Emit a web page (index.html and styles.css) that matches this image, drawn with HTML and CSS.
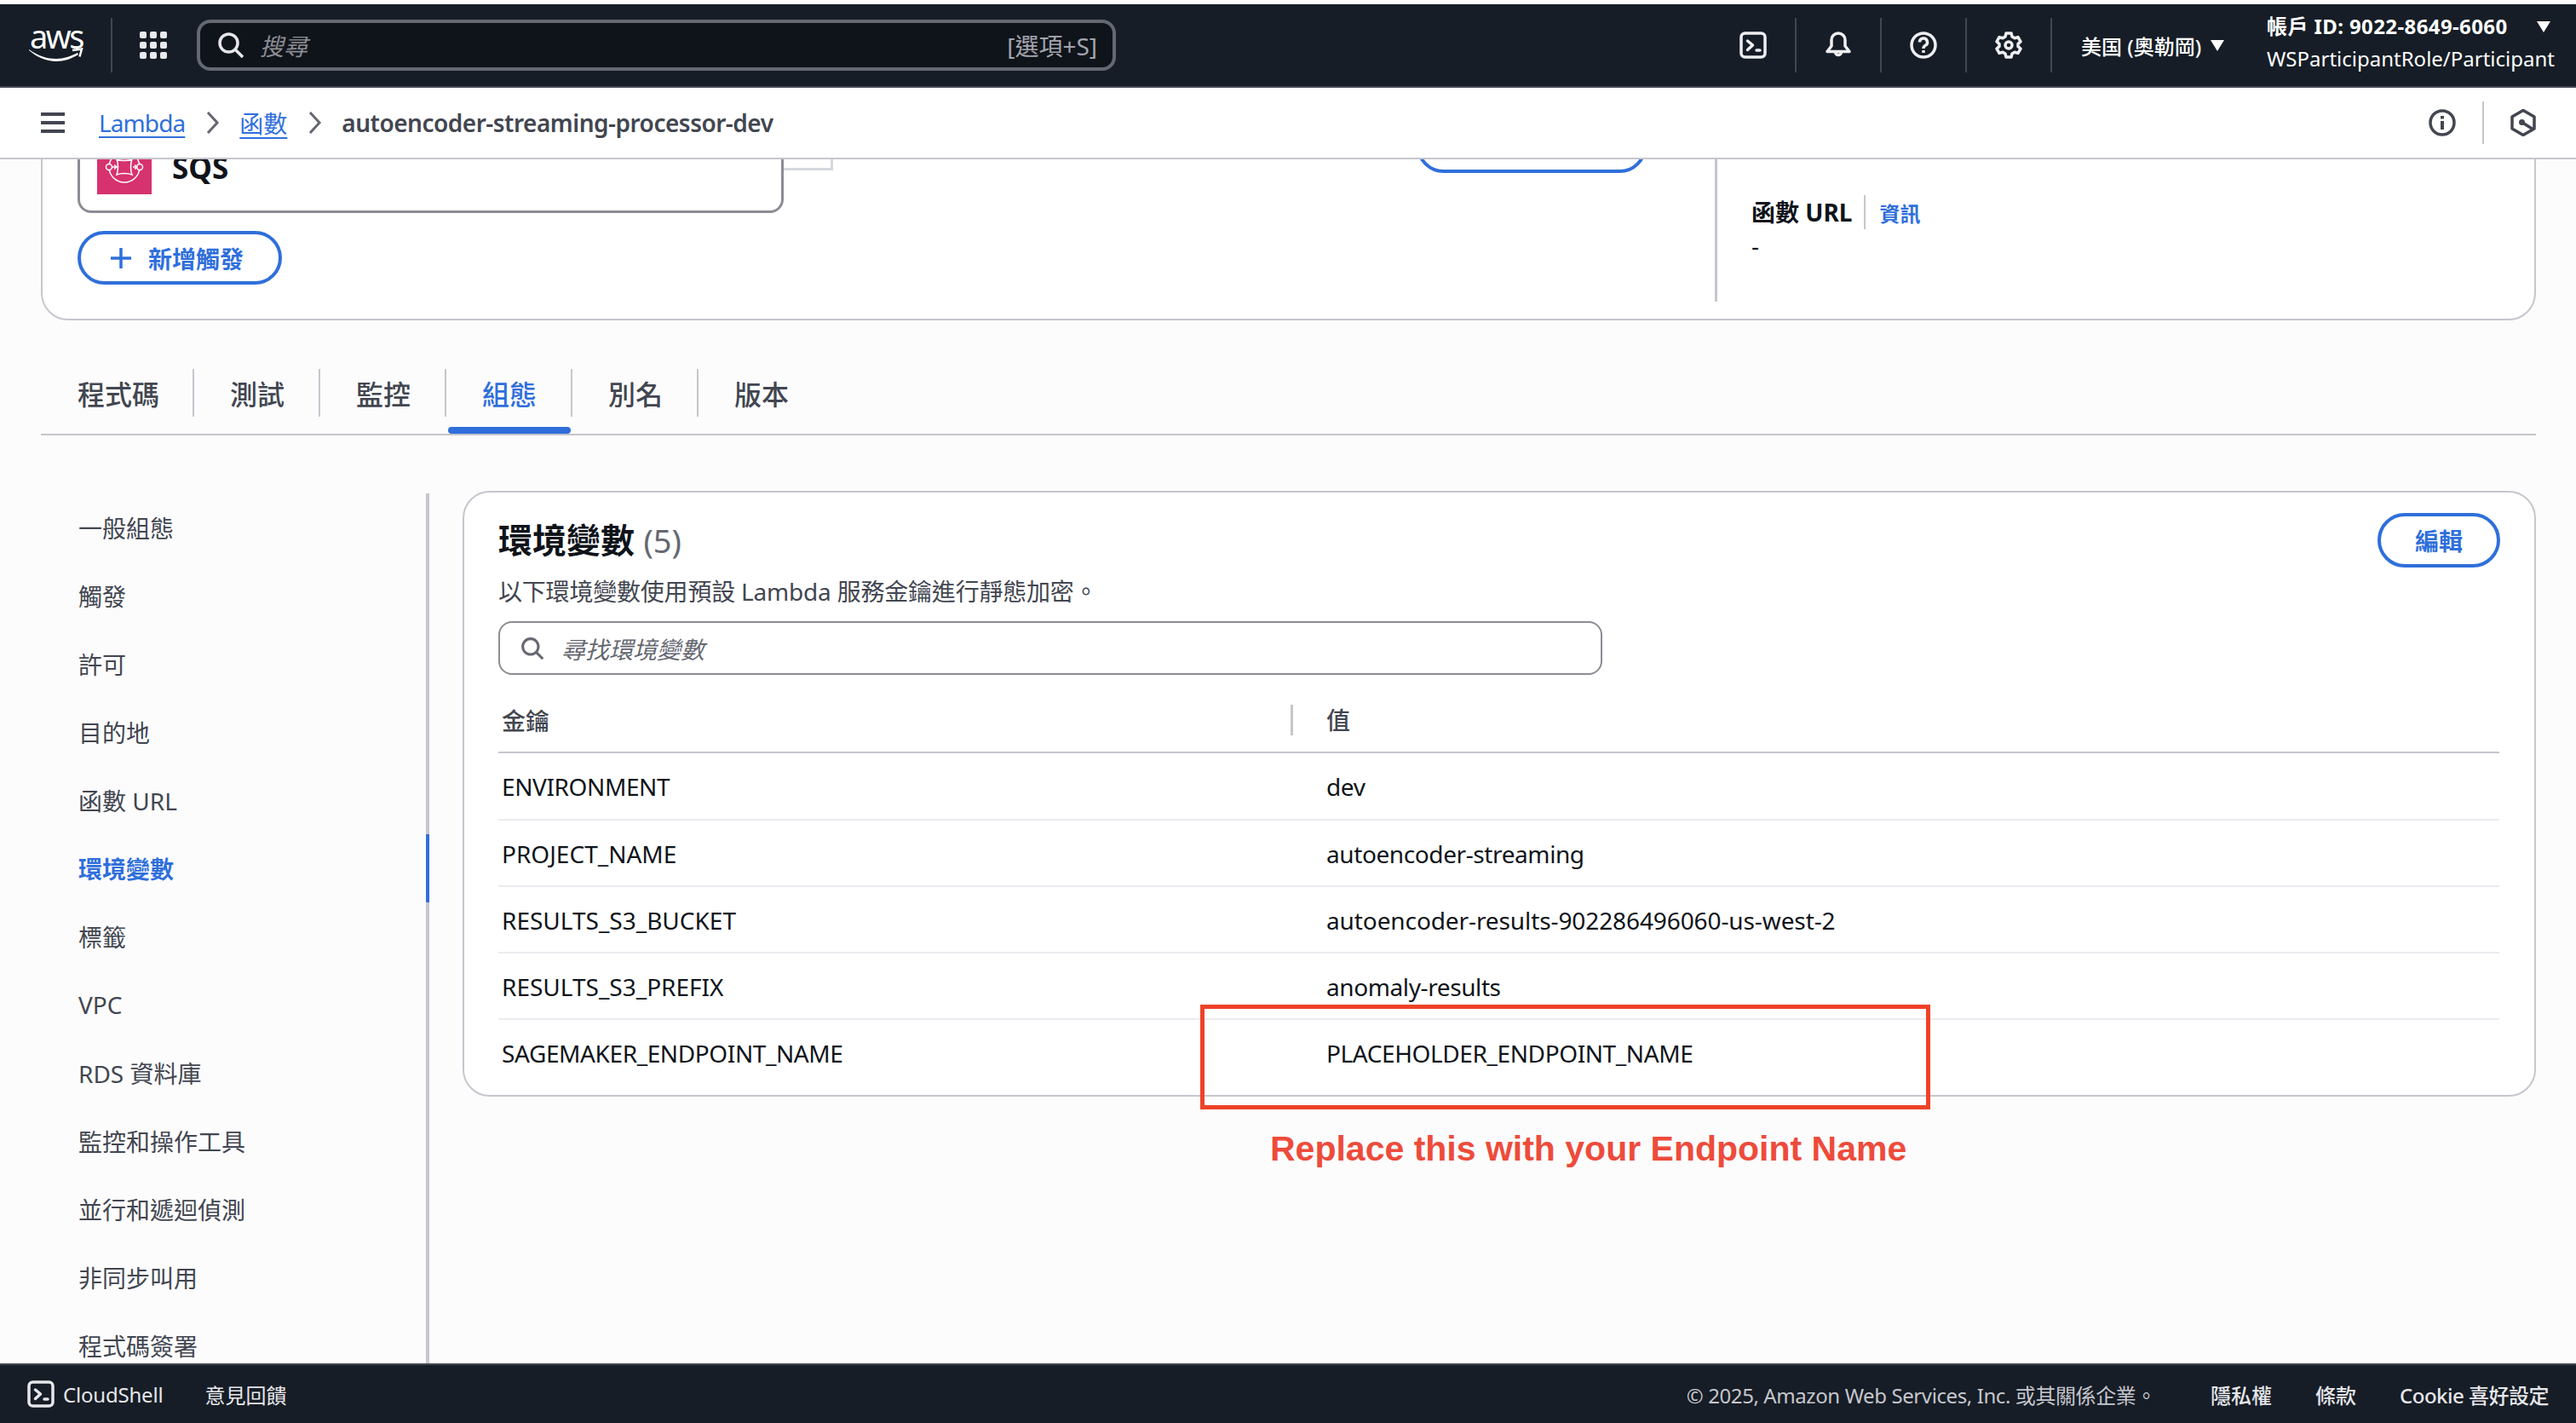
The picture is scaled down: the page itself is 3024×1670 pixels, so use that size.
FILE: index.html
```html
<!DOCTYPE html>
<html lang="zh-Hant">
  <head>
    <meta charset="UTF-8" />
    <title>autoencoder-streaming-processor-dev - Lambda</title>
    <link rel="stylesheet" href="styles.css">
  </head>
  <body>
    <header class="topnav">
      <div class="logo">
        <span class="logo-text">aws</span>
        <svg class="logo-smile" viewBox="0 0 64 18" width="64" height="18"><path d="M0 3C11 11 22 14 32 14c9 0 17-3 25-7l1 2c-8 5-17 8-26 8C21 17 9 12 0 4z" fill="#fff"/><path d="M51 4l11-1.500-2.500 9" fill="none" stroke="#fff" stroke-width="2.500"/></svg>
      </div>
      <div class="nav-sep"></div>
      <svg class="apps" viewBox="0 0 32 32" width="32" height="32" fill="#e9e9ee">
        <rect width="8" height="8" rx="2"/><rect x="12" width="8" height="8" rx="2"/><rect x="24" width="8" height="8" rx="2"/>
        <rect y="12" width="8" height="8" rx="2"/><rect x="12" y="12" width="8" height="8" rx="2"/><rect x="24" y="12" width="8" height="8" rx="2"/>
        <rect y="24" width="8" height="8" rx="2"/><rect x="12" y="24" width="8" height="8" rx="2"/><rect x="24" y="24" width="8" height="8" rx="2"/>
      </svg>
      <div class="global-search">
        <svg viewBox="0 0 32 32" width="32" height="32" fill="none" stroke="#e6e6ea" stroke-width="3.500"><circle cx="13.500" cy="13.500" r="10.500"/><path d="M21 21l9 9"/></svg>
        <span class="global-search-hint">搜尋</span>
        <span class="shortcut">[選項+S]</span>
      </div>
      <div class="nav-right">
        <div class="nav-icon">
          <svg viewBox="0 0 32 32" width="32" height="32" fill="none" stroke="#eeeef2" stroke-width="3.500" stroke-linecap="round" stroke-linejoin="round"><rect x="2" y="2" width="28" height="28" rx="4.500"/><path d="M9.500 11l6 5-6 5.500M20 22h4"/></svg>
        </div>
        <div class="nav-icon">
          <svg viewBox="0 0 32 32" width="32" height="32" fill="none" stroke="#eeeef2" stroke-width="3.500" stroke-linecap="round" stroke-linejoin="round"><path d="M8 17v-7a8 8 0 0 1 16 0v7l5 6.500H3z"/><path d="M12.500 24a3.500 3.500 0 0 0 7 0"/></svg>
        </div>
        <div class="nav-icon">
          <svg viewBox="0 0 32 32" width="32" height="32" fill="none" stroke="#eeeef2" stroke-width="3.500"><circle cx="16" cy="16" r="14"/><path d="M11.500 12.500a4.500 4.500 0 1 1 6.500 4c-1.500.8-2 1.500-2 3.500"/><path d="M16 22v3"/></svg>
        </div>
        <div class="nav-icon">
          <svg viewBox="0 0 32 32" width="32" height="32" fill="none" stroke="#eeeef2" stroke-width="3.500" stroke-linejoin="round"><path d="M13 2h6l1 4 3 1.800 4-1.200 3 5.200-3 2.800v2.800l3 2.800-3 5.200-4-1.200-3 1.800-1 4h-6l-1-4-3-1.800-4 1.200-3-5.200 3-2.800v-2.800l-3-2.800 3-5.200 4 1.200 3-1.800z"/><circle cx="16" cy="16" r="4"/></svg>
        </div>
        <div class="region">美国 (奧勒岡)<span class="caret"></span></div>
        <div class="account">
          <div class="account-id">帳戶 ID: 9022-8649-6060<span class="caret"></span></div>
          <div>WSParticipantRole/Participant</div>
        </div>
      </div>
    </header>

    <nav class="crumbbar">
      <div class="hamburger"><span></span><span></span><span></span></div>
      <a class="crumb crumb-latin" href="#">Lambda</a>
      <svg class="chevron" viewBox="0 0 16 28" width="16" height="28" fill="none" stroke="#656871" stroke-width="3"><path d="M2 2l11 12L2 26"/></svg>
      <a class="crumb" href="#">函數</a>
      <svg class="chevron" viewBox="0 0 16 28" width="16" height="28" fill="none" stroke="#656871" stroke-width="3"><path d="M2 2l11 12L2 26"/></svg>
      <span class="crumb-current">autoencoder-streaming-processor-dev</span>
      <div class="crumb-tools">
        <div class="crumb-tool">
          <svg viewBox="0 0 32 32" width="32" height="32" fill="none" stroke="#424650" stroke-width="3.500"><circle cx="16" cy="16" r="14"/><path d="M16 14v10" stroke-width="4"/><path d="M16 8v3.500" stroke-width="4"/></svg>
        </div>
        <div class="crumb-tool crumb-tool-last">
          <svg viewBox="0 0 32 32" width="32" height="32" fill="none" stroke="#424650" stroke-width="3.500" stroke-linejoin="round"><path d="M16 1.500l13 7.500v14l-13 7.500L3 23V9z"/><circle cx="14.500" cy="15.500" r="3.500" fill="#424650" stroke="none"/><path d="M14.500 15.500L28 24"/></svg>
        </div>
      </div>
    </nav>

    <main class="page">
      <section class="overview">
        <div class="diagram">
          <div class="trigger-col">
            <div class="trigger-box">
              <div class="sqs-icon">
                <svg viewBox="0 0 64 64" width="64" height="64" fill="none" stroke="#fff" stroke-width="1.500"><circle cx="32" cy="32" r="18"/><circle cx="14" cy="32" r="3.500" fill="#d6326f"/><circle cx="50" cy="32" r="3.500" fill="#d6326f"/><path d="M23 23c5 2 13 2 18 0-2 5-2 13 0 18-5-2-13-2-18 0 2-5 2-13 0-18z" fill="#d6326f"/><path d="M18 32h4M42 32h4M20 29.500l3 2.500-3 2.500M44 29.500l3 2.500-3 2.500"/></svg>
              </div>
              <span class="sqs-name">SQS</span>
            </div>
            <button class="btn btn-add">
              <svg viewBox="0 0 24 24" width="24" height="24" fill="none" stroke="#2f6fdb" stroke-width="3.500"><path d="M12 0v24M0 12h24"/></svg>
              新增觸發
            </button>
          </div>
          <div class="connector"></div>
          <button class="btn btn-dest"></button>
        </div>
        <div class="overview-side">
          <div class="side-title">
            <strong>函數 URL</strong>
            <a class="info-link" href="#">資訊</a>
          </div>
          <div class="side-value">-</div>
        </div>
      </section>

      <div class="tabs">
        <div class="tab">程式碼</div>
        <div class="tab">測試</div>
        <div class="tab">監控</div>
        <div class="tab tab-active">組態</div>
        <div class="tab">別名</div>
        <div class="tab">版本</div>
      </div>

      <div class="config">
        <ul class="sidenav">
          <li>一般組態</li>
          <li>觸發</li>
          <li>許可</li>
          <li>目的地</li>
          <li>函數 URL</li>
          <li class="active">環境變數</li>
          <li>標籤</li>
          <li>VPC</li>
          <li>RDS 資料庫</li>
          <li>監控和操作工具</li>
          <li>並行和遞迴偵測</li>
          <li>非同步叫用</li>
          <li>程式碼簽署</li>
        </ul>

        <div class="panel-wrap">
          <section class="panel">
            <div class="panel-head">
              <div>
                <h2>環境變數 <span class="count">(5)</span></h2>
                <p class="panel-desc">以下環境變數使用預設 Lambda 服務金鑰進行靜態加密。</p>
              </div>
              <button class="btn btn-edit">編輯</button>
            </div>
            <div class="filter">
              <svg viewBox="0 0 32 32" width="28" height="28" fill="none" stroke="#656871" stroke-width="3.500"><circle cx="13.500" cy="13.500" r="10.500"/><path d="M21 21l9 9"/></svg>
              <span class="filter-hint">尋找環境變數</span>
            </div>
            <table class="env-table">
              <thead>
                <tr><th class="col-key">金鑰</th><th><span class="th-value">值</span></th></tr>
              </thead>
              <tbody>
                <tr><td class="tight">ENVIRONMENT</td><td class="tight">dev</td></tr>
                <tr><td>PROJECT_NAME</td><td class="tight">autoencoder-streaming</td></tr>
                <tr><td>RESULTS_S3_BUCKET</td><td class="num">autoencoder-results-902286496060-us-west-2</td></tr>
                <tr><td>RESULTS_S3_PREFIX</td><td class="tight">anomaly-results</td></tr>
                <tr><td class="tight">SAGEMAKER_ENDPOINT_NAME</td><td class="tight">PLACEHOLDER_ENDPOINT_NAME</td></tr>
              </tbody>
            </table>
          </section>
          <div class="callout-box"></div>
          <div class="callout-text">Replace this with your Endpoint Name</div>
        </div>
      </div>
    </main>

    <footer class="footer">
      <svg viewBox="0 0 32 32" width="32" height="32" fill="none" stroke="#e6e6ea" stroke-width="3.500" stroke-linecap="round" stroke-linejoin="round"><rect x="2" y="2" width="28" height="28" rx="4.500"/><path d="M9.500 11l6 5-6 5.500M20 22h4"/></svg>
      <span class="footer-shell">CloudShell</span>
      <span class="footer-feedback">意見回饋</span>
      <span class="footer-copy">© 2025, Amazon Web Services, Inc. 或其關係企業。</span>
      <span class="footer-link">隱私權</span>
      <span class="footer-link">條款</span>
      <span class="footer-link footer-cookie">Cookie 喜好設定</span>
    </footer>
  </body>
</html>
```

FILE: styles.css
```css
html {
  overflow: hidden;
}
body {
  margin: 0;
  height: 1670px;
  display: flex;
  flex-direction: column;
  font-family: "Noto Sans", "Noto Sans CJK TC", sans-serif;
  font-size: 28px;
  color: #0f141a;
  background-color: #fcfcfd;
  overflow: hidden;
}
a {
  color: #2f6fdb;
}
button {
  font-family: inherit;
}

/* top bar */
.topnav {
  margin-top: 5px;
  height: 96px;
  flex: none;
  display: flex;
  align-items: center;
  background-color: #161d26;
  border-bottom: 2px solid #424650;
  color: white;
  box-sizing: content-box;
}
.logo {
  width: 64px;
  height: 40px;
  margin-left: 34px;
  position: relative;
}
.logo-text {
  position: absolute;
  left: 1px;
  top: -11px;
  font-size: 38px;
  line-height: 40px;
  letter-spacing: -2.5px;
}
.logo-smile {
  position: absolute;
  left: 0;
  bottom: 0;
}
.nav-sep {
  width: 2px;
  height: 64px;
  margin: 0 32px 0 32px;
  background-color: #424650;
}
.global-search {
  width: 1079px;
  height: 60px;
  box-sizing: border-box;
  margin-left: 35px;
  padding: 0 18px 0 20px;
  display: flex;
  align-items: center;
  gap: 18px;
  background-color: #0f141a;
  border: 4px solid #656871;
  border-radius: 16px;
}
.global-search-hint {
  font-style: italic;
  color: #8c8c94;
}
.shortcut {
  margin-left: auto;
  color: #a4a4ad;
}
.nav-right {
  margin-left: auto;
  display: flex;
  align-items: center;
}
.nav-icon {
  width: 98px;
  height: 64px;
  display: flex;
  align-items: center;
  justify-content: center;
  border-right: 2px solid #424650;
}
.region {
  display: flex;
  align-items: center;
  padding-left: 34px;
  width: 252px;
  box-sizing: border-box;
  font-size: 24px;
  white-space: nowrap;
  font-weight: 500;
}
.caret {
  display: inline-block;
  margin-left: 11px;
  border-left: 8px solid transparent;
  border-right: 8px solid transparent;
  border-top: 13px solid white;
}
.account {
  width: 363px;
  margin-bottom: 6px;
  font-size: 24px;
  line-height: 38px;
  white-space: nowrap;
}
.account-id {
  display: flex;
  align-items: center;
  font-weight: 700;
  letter-spacing: 0.4px;
}
.account-id .caret {
  margin-left: 34px;
}

/* breadcrumbs */
.crumbbar {
  height: 82px;
  flex: none;
  display: flex;
  align-items: center;
  background-color: white;
  border-bottom: 2px solid #c6c6cd;
  color: #424650;
}
.hamburger {
  width: 28px;
  margin: 0 40px 0 48px;
  display: flex;
  flex-direction: column;
  gap: 6px;
}
.hamburger span {
  height: 4px;
  background-color: #424650;
}
.crumb {
  text-underline-offset: 5px;
}
.crumb-latin {
  letter-spacing: -0.9px;
}
.chevron {
  margin: 0 23px 0 25px;
}
.crumb-current {
  font-weight: 600;
  letter-spacing: -0.5px;
}
.crumb-tools {
  margin-left: auto;
  display: flex;
  align-items: center;
}
.crumb-tool {
  width: 94px;
  height: 50px;
  display: flex;
  align-items: center;
  justify-content: center;
  border-right: 2px solid #c6c6cd;
}
.crumb-tool-last {
  width: 92px;
  border-right: none;
  margin-right: 16px;
}

/* page */
.page {
  flex: 1;
  min-height: 0;
  overflow: hidden;
  padding: 0 47px 0 48px;
}
.overview {
  height: 259px;
  margin-top: -70px;
  box-sizing: border-box;
  padding: 0 0 20px 41px;
  display: flex;
  background-color: white;
  border: 2px solid #c6c6cd;
  border-radius: 32px;
}
.diagram {
  width: 1922px;
  position: relative;
  display: flex;
  align-items: flex-start;
}
.trigger-col {
  width: 829px;
  display: flex;
  flex-direction: column;
  align-items: flex-start;
}
.trigger-box {
  width: 100%;
  height: 120px;
  margin-top: 11px;
  box-sizing: border-box;
  padding-left: 20px;
  display: flex;
  align-items: center;
  gap: 24px;
  background-color: white;
  border: 3px solid #8c8c94;
  border-radius: 16px;
}
.sqs-icon {
  width: 64px;
  height: 64px;
  background-color: #d6326f;
  margin-top: 12px;
}
.sqs-name {
  font-size: 35px;
  line-height: 24px;
  font-weight: 700;
  margin-top: 14px;
}
.connector {
  width: 58px;
  height: 60px;
  border-right: 3px solid #d5d8de;
  border-bottom: 3px solid #d5d8de;
  box-sizing: border-box;
  margin-top: 21px;
}
.btn {
  background-color: white;
  color: #2f6fdb;
  border: 4px solid #2f6fdb;
  border-radius: 40px;
  font-size: 28px;
  font-weight: 700;
  height: 63px;
  display: flex;
  align-items: center;
  justify-content: center;
}
.btn-add {
  width: 240px;
  margin-top: 21px;
  padding: 0 0 0 35px;
  justify-content: flex-start;
  gap: 20px;
}
.btn-dest {
  width: 270px;
  margin: 21px 80px 0 auto;
}
.overview-side {
  flex: 1;
  border-left: 3px solid #c6c6cd;
  padding: 110px 0 0 40px;
}
.side-title {
  display: flex;
  align-items: center;
}
.side-title strong {
  padding-right: 14px;
  border-right: 2px solid #c6c6cd;
  line-height: 40px;
}
.info-link {
  margin-left: 16px;
  font-size: 24px;
  font-weight: 600;
  text-decoration: none;
}
.side-value {
  line-height: 38px;
}

/* tabs */
.tabs {
  display: flex;
  margin-top: 57px;
  height: 76px;
  border-bottom: 2px solid #c6c6cd;
  box-sizing: content-box;
}
.tab {
  width: 148px;
  height: 56px;
  padding-left: 42px;
  box-sizing: border-box;
  display: flex;
  align-items: center;
  font-size: 32px;
  color: #424650;
  border-right: 2px solid #c6c6cd;
  position: relative;
  font-weight: 500;
}
.tab:first-child {
  width: 180px;
  padding-left: 43px;
}
.tab:last-child {
  border-right: none;
}
.tab-active {
  color: #2f6fdb;
}
.tab-active::after {
  content: "";
  position: absolute;
  left: 2px;
  right: 0;
  top: 68px;
  height: 8px;
  border-radius: 4px;
  background-color: #2f6fdb;
}

/* config area */
.config {
  display: flex;
  align-items: flex-start;
  margin-top: 65px;
}
.sidenav {
  list-style: none;
  margin: 3px 0 0;
  padding: 0 0 40px 0;
  width: 456px;
  box-sizing: border-box;
  border-right: 4px solid #c6c6cd;
  color: #424650;
}
.sidenav li {
  height: 80px;
  padding-left: 44px;
  display: flex;
  align-items: center;
}
.sidenav li.active {
  color: #2f6fdb;
  font-weight: 700;
  margin-right: -4px;
  border-right: 4px solid #2f6fdb;
}
.panel-wrap {
  flex: 1;
  margin-left: 39px;
  position: relative;
}
.panel {
  height: 711px;
  box-sizing: border-box;
  padding: 26px 40px 0 40px;
  background-color: white;
  border: 2px solid #c6c6cd;
  border-radius: 32px;
}
.panel-head {
  display: flex;
  justify-content: space-between;
  align-items: flex-start;
}
h2 {
  margin: 0;
  font-size: 40px;
  line-height: 60px;
  font-weight: 700;
}
.count {
  color: #656871;
  font-weight: 400;
  font-size: 38px;
}
.panel-desc {
  margin: 0;
  line-height: 60px;
  color: #424650;
  letter-spacing: -0.2px;
}
.btn-edit {
  width: 144px;
  height: 64px;
  margin-top: -2px;
}
.filter {
  width: 1296px;
  height: 63px;
  box-sizing: border-box;
  margin-top: 5px;
  padding-left: 24px;
  display: flex;
  align-items: center;
  gap: 20px;
  border: 2px solid #8c8c94;
  border-radius: 16px;
}
.filter-hint {
  font-style: italic;
  color: #656871;
}
.env-table {
  width: 2349px;
  border-collapse: collapse;
  table-layout: fixed;
  margin-top: 16px;
}
.env-table th {
  text-align: left;
  height: 74px;
  padding: 0 0 0 4px;
  font-weight: 500;
  color: #424650;
  border-bottom: 2px solid #c6c6cd;
}
.col-key {
  width: 964px;
}
.th-value {
  display: inline-block;
  line-height: 36px;
  position: relative;
}
.th-value::before {
  content: "";
  position: absolute;
  left: -42px;
  top: 0;
  width: 3px;
  height: 36px;
  background-color: #c6c6cd;
}
.env-table td {
  height: 78px;
  box-sizing: border-box;
  padding: 1px 0 0 4px;
  border-bottom: 2px solid #ebebf0;
}
.env-table tbody tr:first-child td {
  height: 79px;
}
.env-table tr:last-child td {
  border-bottom: none;
}
.env-table td.tight {
  letter-spacing: -0.4px;
}
.env-table td.num {
  letter-spacing: -0.1px;
}

/* red annotation drawn over the panel */
.callout-box {
  position: absolute;
  left: 866px;
  top: 603px;
  width: 857px;
  height: 123px;
  box-sizing: border-box;
  border: 5px solid #ee4228;
}
.callout-text {
  position: absolute;
  left: 948px;
  top: 746px;
  font-family: "Liberation Sans", Arial, sans-serif;
  font-size: 41px;
  line-height: 52px;
  font-weight: 700;
  white-space: nowrap;
  color: #ee4b3b;
}

/* footer */
.footer {
  height: 68px;
  flex: none;
  padding: 0 32px;
  display: flex;
  align-items: center;
  background-color: #161d26;
  border-top: 2px solid #424650;
  color: #e6e6ea;
  font-size: 24px;
}
.footer-shell {
  margin-left: 10px;
  letter-spacing: -0.2px;
}
.footer-feedback {
  margin-left: 49px;
}
.footer-copy {
  margin-left: auto;
  margin-right: 13px;
  color: #c6c6cd;
  letter-spacing: -0.4px;
}
.footer-link {
  margin-left: 51px;
  font-weight: 500;
}
.footer-cookie {
  letter-spacing: -0.5px;
}
```
